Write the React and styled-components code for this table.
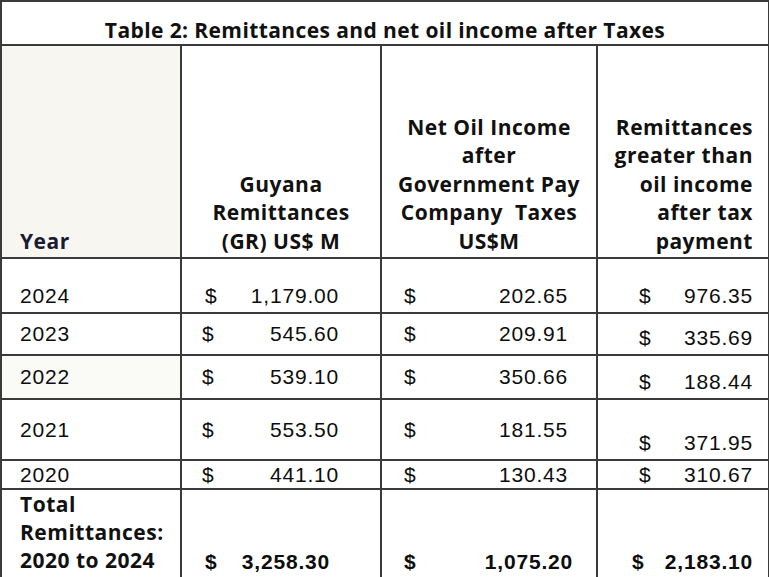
import React from 'react';
import styled, { createGlobalStyle, css } from 'styled-components';

const GlobalStyle = createGlobalStyle`
    html, body {
        margin: 0;
        padding: 0;
        background: #ffffff;
    }
    body {
        width: 769px;
        height: 577px;
        overflow: hidden;
    }
`;

const headFont = css`
    font-family: "Open Sans", "Liberation Sans", sans-serif;
    font-weight: 700;
    color: #111111;
`;

const Table = styled.table`
    width: 768px;
    table-layout: fixed;
    border-collapse: collapse;
    border: 2px solid #3a3a3a;
`;

const Title = styled.th`
    ${headFont};
    height: 41px;
    padding: 0 0 1px 0;
    font-size: 21px;
    letter-spacing: 0.4px;
    line-height: 26px;
    text-align: center;
    vertical-align: bottom;
    border-bottom: 2px solid #3a3a3a;
`;

const HeadCell = styled.th`
    ${headFont};
    height: 209px;
    padding: 0 ${p => p.$pr || 0}px 2px ${p => p.$pl || 0}px;
    font-size: 21px;
    letter-spacing: 0.5px;
    line-height: 28.5px;
    text-align: ${p => p.$text || 'center'};
    vertical-align: bottom;
    background: ${p => (p.$tint ? '#f7f6f1' : '#ffffff')};
    color: ${p => (p.$navy ? '#1a1b33' : '#111111')};
    border: 2px solid #3a3a3a;
`;

const Row = styled.tr`
    height: ${p => p.$h}px;
`;

const Cell = styled.td`
    padding: 0 0 ${p => (p.$align === 'bottom' ? 4 : 0)}px 0;
    vertical-align: ${p => p.$align || 'middle'};
    border: 2px solid #3a3a3a;
    background: ${p => (p.$tint ? '#fafaf7' : '#ffffff')};
    font-family: "Liberation Sans", Arial, sans-serif;
    font-size: 21px;
    letter-spacing: 0.8px;
    color: #0d0d0d;
    line-height: 24px;
`;

const YearText = styled.div`
    padding-left: 18px;
`;

const TotalLabel = styled.div`
    ${headFont};
    padding-left: 18px;
    font-size: 21px;
    letter-spacing: 0.5px;
    line-height: 28px;
`;

const Money = styled.div`
    display: flex;
    justify-content: space-between;
    padding: 0 ${p => p.$pr}px 0 ${p => p.$pl}px;
    font-weight: ${p => (p.$bold ? 700 : 400)};
`;

const cols = [
    { pl: 20, pr: 41 },
    { pl: 22, pr: 28 },
    { pl: 41, pr: 15 },
];

const rows = [
    { year: '2024', h: 55, vals: ['1,179.00', '202.65', '976.35'], align: ['bottom', 'bottom', 'bottom', 'bottom'], shift: [3, 0, 0] },
    { year: '2023', h: 42, vals: ['545.60', '209.91', '335.69'], align: ['middle', 'middle', 'middle', 'bottom'] },
    { year: '2022', h: 44, vals: ['539.10', '350.66', '188.44'], align: ['middle', 'middle', 'middle', 'bottom'], tint: true },
    { year: '2021', h: 61, vals: ['553.50', '181.55', '371.95'], align: ['middle', 'middle', 'middle', 'bottom'] },
    { year: '2020', h: 29, vals: ['441.10', '130.43', '310.67'], align: ['middle', 'middle', 'middle', 'middle'] },
];

const totals = [
    { value: '3,258.30', pl: 23, pr: 50 },
    { value: '1,075.20', pl: 22, pr: 23 },
    { value: '2,183.10', pl: 34, pr: 15 },
];

export default function App() {
    return (
        <>
            <GlobalStyle />
            <Table>
                <colgroup>
                    <col style={{ width: 180 }} />
                    <col style={{ width: 200 }} />
                    <col style={{ width: 216 }} />
                    <col style={{ width: 172 }} />
                </colgroup>
                <thead>
                    <tr>
                        <Title colSpan={4}>Table 2: Remittances and net oil income after Taxes</Title>
                    </tr>
                    <tr>
                        <HeadCell $tint $navy $text="left" $pl={18}>Year</HeadCell>
                        <HeadCell>Guyana<br />Remittances<br />(GR) US$ M</HeadCell>
                        <HeadCell>Net Oil Income<br />after<br />Government Pay<br />Company&nbsp; Taxes<br />US$M</HeadCell>
                        <HeadCell $text="right" $pr={15}>Remittances<br />greater than<br />oil income<br />after tax<br />payment</HeadCell>
                    </tr>
                </thead>
                <tbody>
                    {rows.map(r => (
                        <Row key={r.year} $h={r.h}>
                            <Cell $align={r.align[0]} $tint={r.tint}>
                                <YearText>{r.year}</YearText>
                            </Cell>
                            {r.vals.map((v, i) => (
                                <Cell key={i} $align={r.align[i + 1]}>
                                    <Money $pl={cols[i].pl + (r.shift ? r.shift[i] : 0)} $pr={cols[i].pr}>
                                        <span>$</span>
                                        <span>{v}</span>
                                    </Money>
                                </Cell>
                            ))}
                        </Row>
                    ))}
                    <Row $h={89}>
                        <Cell $align="bottom">
                            <TotalLabel>Total<br />Remittances:<br />2020 to 2024</TotalLabel>
                        </Cell>
                        {totals.map((t, i) => (
                            <Cell key={i} $align="bottom">
                                <Money $bold $pl={t.pl} $pr={t.pr}>
                                    <span>$</span>
                                    <span>{t.value}</span>
                                </Money>
                            </Cell>
                        ))}
                    </Row>
                </tbody>
            </Table>
        </>
    );
}
